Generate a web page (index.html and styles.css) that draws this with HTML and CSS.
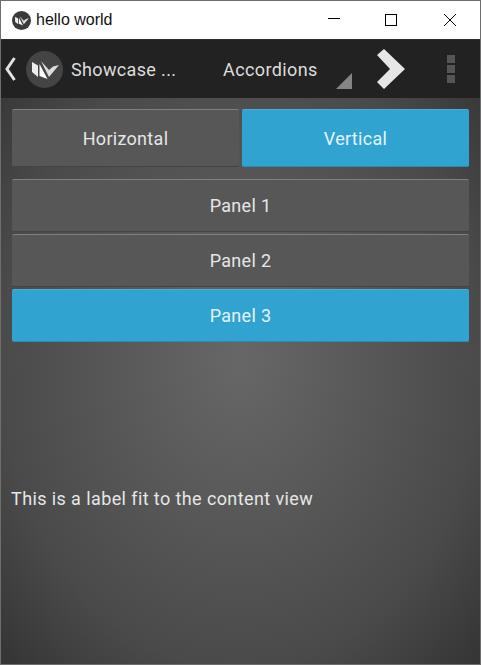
FILE: index.html
```html
<!doctype html>
<html>
<head>
<meta charset="utf-8">
<title>hello world</title>
<link rel="stylesheet" href="styles.css">
</head>
<body>
<div class="window">
	<div class="titlebar">
		<svg class="app-icon" width="19" height="19" viewBox="0 0 37 37">
			<circle cx="18.500" cy="18.500" r="18.500" fill="#3a3a3a"/>
			<path d="M6 11l6 3.500V26l-6-5z" fill="#eee"/>
			<path d="M13.500 13l8 15-8-3z" fill="#fff"/>
			<path d="M15 10l8 16 10-12-6 1.500-4 3.500z" fill="#ddd"/>
		</svg>
		<span class="title">hello world</span>
		<div class="winbtns">
			<svg width="14" height="14" viewBox="0 0 14 14"><path d="M1 5.500h12" stroke="#000" fill="none"/></svg>
			<svg width="14" height="14" viewBox="0 0 14 14"><rect x="0.500" y="1.500" width="11" height="11" stroke="#000" fill="none"/></svg>
			<svg width="14" height="14" viewBox="0 0 14 14"><path d="M1 1l12 12M13 1L1 13" stroke="#000" fill="none"/></svg>
		</div>
	</div>
	<div class="actionbar">
		<svg class="back" width="12" height="26" viewBox="0 0 12 26"><path d="M10.500 2L3 13l7.500 11" stroke="#e2e2e2" stroke-width="3" fill="none"/></svg>
		<svg class="logo" width="37" height="37" viewBox="0 0 37 37">
			<circle cx="18.500" cy="18.500" r="18.500" fill="#444"/>
			<path d="M6 11l6 3.500V26l-6-5z" fill="#eee"/>
			<path d="M13.500 13l8 15-8-3z" fill="#fff"/>
			<path d="M15 10l8 16 10-12-6 1.500-4 3.500z" fill="#ddd"/>
		</svg>
		<span class="app-name">Showcase ...</span>
		<div class="spinner">
			<span>Accordions</span>
			<i class="corner"></i>
		</div>
		<svg class="next" width="28" height="40" viewBox="0 0 28 40"><path d="M7 0l21 20L7 40l-7-7 13-13L0 6z" fill="#e6e6e6"/></svg>
		<div class="dots"><i></i><i></i><i></i></div>
	</div>
	<div class="content">
		<div class="toggle-row">
			<div class="btn">Horizontal</div>
			<div class="btn active">Vertical</div>
		</div>
		<div class="accordion">
			<div class="btn panel">Panel 1</div>
			<div class="btn panel">Panel 2</div>
			<div class="btn panel active">Panel 3</div>
		</div>
		<div class="label-wrap">
			<p class="label">This is a label fit to the content view</p>
		</div>
	</div>
</div>
</body>
</html>
```
FILE: styles.css
```css
* { padding: 0; margin: 0; box-sizing: border-box; }
html, body { height: 100%; }
body { font-family: Roboto, "Liberation Sans", sans-serif; overflow: hidden; }

.window { width: 481px; height: 665px; display: flex; flex-direction: column; border: 1px solid #6e6e6e; }

.titlebar { height: 38px; background: #fff; display: flex; align-items: center; padding-left: 11px; flex: none; }
.title { font-family: "Liberation Sans", sans-serif; font-size: 16px; color: #111; margin-left: 5px; }
.winbtns { margin-left: auto; display: flex; gap: 44px; padding-right: 23px; }
.winbtns svg { display: block; }

.actionbar { height: 59px; background: #222; display: flex; align-items: center; flex: none; color: #ddd; border-top: 1px solid #2c2c2c; }
.back { margin-left: 3px; }
.logo { margin-left: 10px; }
.app-name { font-size: 18px; letter-spacing: .35px; margin-left: 8px; width: 150px; }
.spinner { width: 140px; height: 100%; position: relative; display: flex; align-items: center; font-size: 18px; letter-spacing: .4px; padding-left: 2px; }
.corner { position: absolute; right: 9px; bottom: 9px; width: 0; height: 0; border-style: solid; border-width: 0 0 16px 16px; border-color: transparent transparent #858585 transparent; }
.next { margin-left: 16px; }
.dots { margin-left: 42px; display: flex; flex-direction: column; gap: 2px; }
.dots i { display: block; width: 8px; height: 8px; background: #555; }

.content { flex: 1; padding: 11px 11px 0; display: flex; flex-direction: column; background: radial-gradient(ellipse 330px 420px at 239px 262px, #676767 0%, #4a4a4a 73%, #363636 100%); }
.toggle-row { display: flex; gap: 3px; height: 58px; }
.toggle-row .btn { flex: 1; }
.accordion { display: flex; flex-direction: column; gap: 2px; margin-top: 12px; }

.btn { display: flex; align-items: center; justify-content: center; font-size: 18px; letter-spacing: .3px; color: #e6e6e6; background: #575757; border-top: 1px solid #808080; border-bottom: 1px solid #444; border-radius: 2px; }
.btn.panel { height: 53px; }
.btn.active { background: #31a3d0; color: #e4f3f9; border-top-color: #48aed6; border-bottom-color: #2a8cb3; }

.label-wrap { flex: 1; display: flex; align-items: center; }
.label { font-size: 18px; letter-spacing: .4px; color: #e6e6e6; margin-left: -1px; margin-top: -10px; }
```
